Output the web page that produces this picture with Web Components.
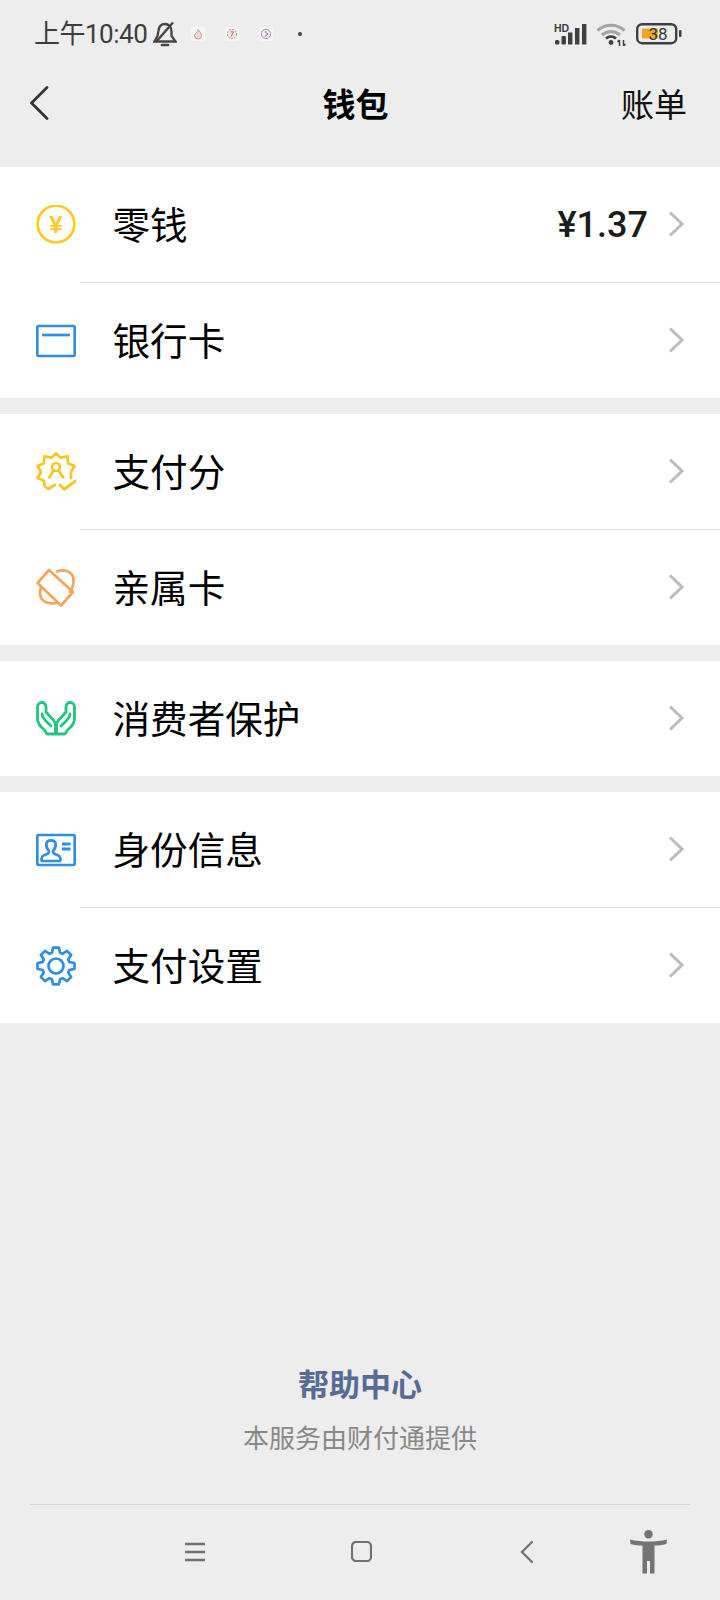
<!DOCTYPE html>
<html lang="zh">
<head>
<meta charset="utf-8">
<title>钱包</title>
<style>
  html, body { margin: 0; padding: 0; }
  body {
    width: 720px;
    height: 1600px;
    overflow: hidden;
    background: #ededed;
    font-family: "Noto Sans CJK SC", "Noto Sans", sans-serif;
  }
</style>
</head>
<body>
<wallet-app></wallet-app>

<template id="status-tpl">
  <style>
    :host { display: flex; align-items: center; height: 68px; padding: 0 0 0 34px; color: #3c3c3c; }
    .time { font: 400 26px/1 Roboto, "Noto Sans CJK SC", sans-serif; letter-spacing: -0.5px; white-space: nowrap; }
    .left { display: flex; align-items: center; }
    .bell { margin-left: 6px; }
    .app { width: 14px; height: 14px; background: #f7f4f4; border-radius: 2px; margin-left: 20px; display: block; }
    .bell + .app { margin-left: 14px; }
    .dot { width: 4px; height: 4px; border-radius: 50%; background: #444; margin-left: 25px; }
    .right { margin-left: auto; display: flex; align-items: center; margin-right: 38px; }
    .wifi { margin-left: 9px; }
    .battery { margin-left: 9px; position: relative; width: 46px; height: 22px; }
    .battery b { position: absolute; left: 11px; top: 1px; width: 22px; text-align: center; font: 400 17px/20px Roboto, sans-serif; color: #333; }
  </style>
  <div class="left">
    <span class="time">上午10:40</span>
    <svg class="bell" width="24" height="26" viewBox="0 0 24 26" fill="none" stroke="#444" stroke-width="2.300">
      <path d="M1.500 20.500H22.500L18.500 15V10.500C18.500 6 15.500 3 12 3C8.500 3 6 5.500 5.500 9.500L4.500 15Z"/>
      <path d="M20 1.500L3 21" stroke-width="2.400"/>
      <path d="M9 24H15" stroke-width="2.600" stroke-linecap="round"/>
    </svg>
    <svg class="app" viewBox="0 0 14 14" fill="none"><path d="M7 2.500C8 4.500 10.500 6 10.500 8.500A3.500 3.500 0 0 1 3.500 8.500C3.500 7 5 6.500 5.500 5.500C6 6 6.500 6 7 2.500Z" fill="#f2d9d9" stroke="#b88" stroke-width=".8"/></svg>
    <svg class="app" viewBox="0 0 14 14" fill="none"><circle cx="7" cy="7" r="4.600" fill="#f6e4e0" stroke="#a88" stroke-width=".9" stroke-dasharray="2 1"/><path d="M5.500 4.800H8.500L6 9.500" stroke="#a66" stroke-width=".9"/></svg>
    <svg class="app" viewBox="0 0 14 14" fill="none"><circle cx="7" cy="7" r="4.600" fill="#f2eef4" stroke="#98a" stroke-width=".9"/><path d="M5.800 4.500L9 7L5.800 9.500" stroke="#86a" stroke-width="1"/></svg>
    <span class="dot"></span>
  </div>
  <div class="right">
    <svg width="33" height="22" viewBox="0 0 33 22" fill="#3f3f3f">
      <text x="0" y="9" font-family="Liberation Sans, sans-serif" font-weight="700" font-size="10.500">HD</text>
      <rect x="1" y="17" width="4.400" height="4.500" rx="1.500"/><rect x="7.500" y="13" width="4.400" height="8.500" rx="1"/><rect x="14" y="9.500" width="4.400" height="12"/><rect x="21" y="5" width="4.400" height="16.500"/><rect x="28" y="1" width="4.400" height="20.500"/>
    </svg>
    <svg class="wifi" width="31" height="24" viewBox="0 0 31 24" fill="none">
      <path d="M1.500 8.500C9 1.500 21 1.500 28.500 8.500" stroke="#a6a6a6" stroke-width="3.200"/>
      <path d="M6 13C11 8.500 19 8.500 24 13" stroke="#a6a6a6" stroke-width="3.200"/>
      <path d="M10 16.500C13 14 17 14 20 16.500" stroke="#3f3f3f" stroke-width="2.800"/>
      <circle cx="15" cy="20.500" r="2.400" fill="#3f3f3f"/>
      <path d="M23.500 24V18M21.500 20L23.500 18M27.500 18V24M27.500 24L29.500 22" stroke="#3f3f3f" stroke-width="1.500"/>
    </svg>
    <span class="battery">
      <svg width="46" height="22" viewBox="0 0 46 22" fill="none">
        <rect x="1.200" y="1.200" width="39" height="19" rx="5" stroke="#3f3f3f" stroke-width="2.400"/>
        <rect x="6" y="5.500" width="16" height="10" rx="1" fill="#f5a623"/>
        <rect x="43" y="7" width="2.500" height="7" rx="1" fill="#3f3f3f"/>
      </svg>
      <b>38</b>
    </span>
  </div>
</template>

<template id="nav-tpl">
  <style>
    :host { display: grid; grid-template-columns: 1fr auto 1fr; align-items: center; height: 72px; padding: 0 33px 0 30px; }
    .title { font-size: 33px; font-weight: 700; color: #000; line-height: 1; transform: translateY(-1px); margin-right: 6px; }
    .bill { justify-self: end; font-size: 33px; color: #111; line-height: 1; font-weight: 400; transform: translateY(-1px); }
    svg { display: block; transform: translateY(-1px); }
  </style>
  <svg width="20" height="34" viewBox="0 0 20 34" fill="none" stroke="#333" stroke-width="2.800" stroke-linecap="round" stroke-linejoin="round"><path d="M17 1.500L1.500 17L17 32.500"/></svg>
  <div class="title"><slot name="title"></slot></div>
  <div class="bill"><slot name="action"></slot></div>
</template>

<template id="group-tpl">
  <style>
    :host { display: flex; flex-direction: column; gap: 1px; background: #fff; margin-top: 16px; }
    ::slotted(wallet-row:not(:first-child)) { --sep: #e2e2e2; }
  </style>
  <slot></slot>
</template>

<template id="row-tpl">
  <style>
    :host { display: flex; align-items: center; height: 115px; box-sizing: border-box; padding: 0 0 0 36px; position: relative; }
    .sep { position: absolute; left: 80px; right: 0; top: -1px; height: 1px; background: var(--sep, transparent); }
    .label { margin-left: 36.500px; font-size: 37.600px; line-height: 1; color: #000; flex: 1; font-weight: 400; transform: translateY(-2px); }
    .value { font: 500 36px/1 Roboto, sans-serif; color: #1c1c1c; margin-right: 20px; }
    .chev { margin-right: 36px; flex: none; display: block; transform: translateY(-1px); }
  </style>
  <div class="sep"></div>
  <slot name="icon"></slot>
  <div class="label"><slot></slot></div>
  <div class="value"><slot name="value"></slot></div>
  <svg class="chev" width="16" height="26" viewBox="0 0 16 26" fill="none" stroke="#bcbcbc" stroke-width="3" stroke-linejoin="miter"><path d="M2 1.500L14 13L2 24.500"/></svg>
</template>

<template id="footer-tpl">
  <style>
    :host { display: flex; flex-direction: column; align-items: center; margin-top: auto; }
    .help { font-size: 31px; font-weight: 700; color: #576b95; line-height: 1; }
    .note { font-size: 26px; color: #888; line-height: 1; margin-top: 26.500px; }
    .line { align-self: stretch; height: 1px; background: #d6d6d6; margin: 54px 30px 0; }
  </style>
  <div class="help">帮助中心</div>
  <div class="note">本服务由财付通提供</div>
  <div class="line"></div>
</template>

<template id="keys-tpl">
  <style>
    :host { display: flex; align-items: center; height: 95px; padding: 0 0 2px 184px; box-sizing: border-box; }
    svg { display: block; flex: none; }
    .home { margin-left: 146px; }
    .back { margin-left: 148px; }
    .person { margin-left: 97px; }
  </style>
  <svg width="21" height="20" viewBox="0 0 21 20" fill="none" stroke="#707070" stroke-width="2.600"><path d="M1 2H21M1 10H21M1 18H21"/></svg>
  <svg class="home" width="21" height="21" viewBox="0 0 21 21" fill="none" stroke="#707070" stroke-width="2.200"><rect x="1" y="1" width="19" height="19" rx="4"/></svg>
  <svg class="back" width="13" height="22" viewBox="0 0 13 22" fill="none" stroke="#707070" stroke-width="2.200" stroke-linecap="round"><path d="M12 1L2 11L12 21"/></svg>
  <svg class="person" width="37" height="44" viewBox="0 0 37 44" fill="#747474">
    <circle cx="18.500" cy="4.200" r="4.200"/>
    <path d="M0 9.500C6 11 12 11.500 18.500 11.500C25 11.500 31 11 37 9.500L36.500 14C32 15 28 15.500 24.500 15.500V43.500H20V31H17V43.500H12.500V15.500C9 15.500 5 15 0.500 14Z"/>
  </svg>
</template>

<template id="app-tpl">
  <style>
    :host { display: flex; flex-direction: column; height: 1600px; }
    .menu { padding-top: 11px; display: block; }
    wallet-footer { margin-top: auto; }
    svg { display: block; width: 40px; height: 40px; flex: none; }
  </style>
  <wallet-status></wallet-status>
  <wallet-nav>
    <span slot="title">钱包</span>
    <span slot="action">账单</span>
  </wallet-nav>
  <div class="menu">
    <wallet-group>
      <wallet-row>
        <svg slot="icon" viewBox="0 0 40 40" fill="none"><circle cx="20" cy="19" r="18.300" stroke="#f8cb26" stroke-width="2.700"/><text x="20" y="27.500" text-anchor="middle" font-family="Liberation Sans, sans-serif" font-weight="700" font-size="24" fill="#f8cb26">¥</text></svg>
        零钱
        <span slot="value">¥1.37</span>
      </wallet-row>
      <wallet-row>
        <svg slot="icon" viewBox="0 0 40 40" fill="none" stroke="#2f8ede" stroke-width="2.700"><rect x="1.300" y="5" width="37.400" height="30" rx="1.500"/><path d="M6 14H34"/></svg>
        银行卡
      </wallet-row>
    </wallet-group>
    <wallet-group>
      <wallet-row>
        <svg slot="icon" viewBox="0 0 40 40" fill="none" stroke="#f8c523" stroke-width="2.700" stroke-linejoin="round" stroke-linecap="round">
          <path d="M35 26L35 20L38.500 14L32.100 11.200L31.500 4.200L24.600 5.700L20 1.500L15.400 5.700L8.500 4.200L7.900 11.200L1.500 14L5 20L1.500 26L7.900 28.800L8.500 34L12.300 37L19 33"/>
          <circle cx="20" cy="15" r="4"/>
          <path d="M13.300 25.500L17.500 18.500M27.300 25.500L22.500 18.500"/>
          <path d="M24 33L28.300 37.300L39.500 29" stroke-width="3"/>
        </svg>
        支付分
      </wallet-row>
      <wallet-row>
        <svg slot="icon" viewBox="0 0 40 40" fill="none" stroke="#f0a75c" stroke-width="2.700" stroke-linejoin="round" stroke-linecap="round">
          <path d="M1.500 15L13 2L37 24L25 37.500Z"/>
          <path d="M21 3.500C28 1 36 3 37.300 10C38 15 36.500 20.500 34 24"/>
          <path d="M4.700 20C3 27 5 33 11 34.500C14.500 35.500 18 35.500 20.500 35"/>
        </svg>
        亲属卡
      </wallet-row>
    </wallet-group>
    <wallet-group>
      <wallet-row>
        <svg slot="icon" viewBox="0 0 40 40" fill="none" stroke="#1fc67c" stroke-width="2.800" stroke-linejoin="round" stroke-linecap="round">
          <path d="M19.500 35H11.500C10 35 10 32 7.500 30C3.500 27 1.500 23 1.500 19V8C1.500 2 9.500 2 10 8V13L15 18.500C18 21.500 19.500 23 19.500 27V35"/>
          <path d="M6 15C6 18.500 9 21 11.500 23.500L15 27"/>
          <path d="M20.500 35H28.500C30 35 30 32 32.500 30C36.500 27 38.500 23 38.500 19V8C38.500 2 30.500 2 30 8V13L25 18.500C22 21.500 20.500 23 20.500 27V35"/>
          <path d="M34 15C34 18.500 31 21 28.500 23.500L25 27"/>
        </svg>
        消费者保护
      </wallet-row>
    </wallet-group>
    <wallet-group>
      <wallet-row>
        <svg slot="icon" viewBox="0 0 40 40" fill="none" stroke="#2f8ede" stroke-width="2.700" stroke-linejoin="round">
          <rect x="1.300" y="5" width="37.400" height="30" rx="1.500"/>
          <path d="M5.500 29.500C5.500 26.500 6.500 25.500 10 24.500C13 23.500 13.500 22 12.500 20.500C10 17.500 10 15 10.500 13C11.500 9.500 18 9.500 19.500 13C20 15 20 17.500 17.500 20.500C16.500 22 17 23.500 20 24.500C23.500 25.500 24.500 26.500 24.500 29.500C24.500 30.500 24 31 23 31H7C6 31 5.500 30.500 5.500 29.500Z"/>
          <path d="M26 14H34.500M26 19H34.500" stroke-width="2.800"/>
        </svg>
        身份信息
      </wallet-row>
      <wallet-row>
        <svg slot="icon" viewBox="0 0 40 40" fill="none" stroke="#2f8ede" stroke-width="2.700" stroke-linejoin="round">
          <circle cx="20" cy="20" r="7.500"/>
          <path d="M15.970 6.800L17.070 1.530L22.930 1.530L24.030 6.800L26.480 7.820L30.990 4.870L35.130 9.010L32.180 13.520L33.200 15.970L38.470 17.070L38.470 22.930L33.200 24.030L32.180 26.480L35.130 30.990L30.990 35.130L26.480 32.180L24.030 33.200L22.930 38.470L17.070 38.470L15.970 33.200L13.520 32.180L9.010 35.130L4.870 30.990L7.820 26.480L6.800 24.030L1.530 22.930L1.530 17.070L6.800 15.970L7.820 13.520L4.870 9.010L9.010 4.870L13.520 7.820Z"/>
        </svg>
        支付设置
      </wallet-row>
    </wallet-group>
  </div>
  <wallet-footer></wallet-footer>
  <wallet-keys></wallet-keys>
</template>

<script>
// every element is just a shadow root stamped from its template
class TemplateElement extends HTMLElement {
  constructor() {
    super();
    const tpl = document.getElementById(this.constructor.templateId);
    this.attachShadow({ mode: 'open' }).appendChild(tpl.content.cloneNode(true));
  }
}

const define = (tag, templateId) => {
  customElements.define(tag, class extends TemplateElement {
    static templateId = templateId;
  });
};

define('wallet-status', 'status-tpl');
define('wallet-nav', 'nav-tpl');
define('wallet-group', 'group-tpl');
define('wallet-row', 'row-tpl');
define('wallet-footer', 'footer-tpl');
define('wallet-keys', 'keys-tpl');
define('wallet-app', 'app-tpl');
</script>
</body>
</html>
